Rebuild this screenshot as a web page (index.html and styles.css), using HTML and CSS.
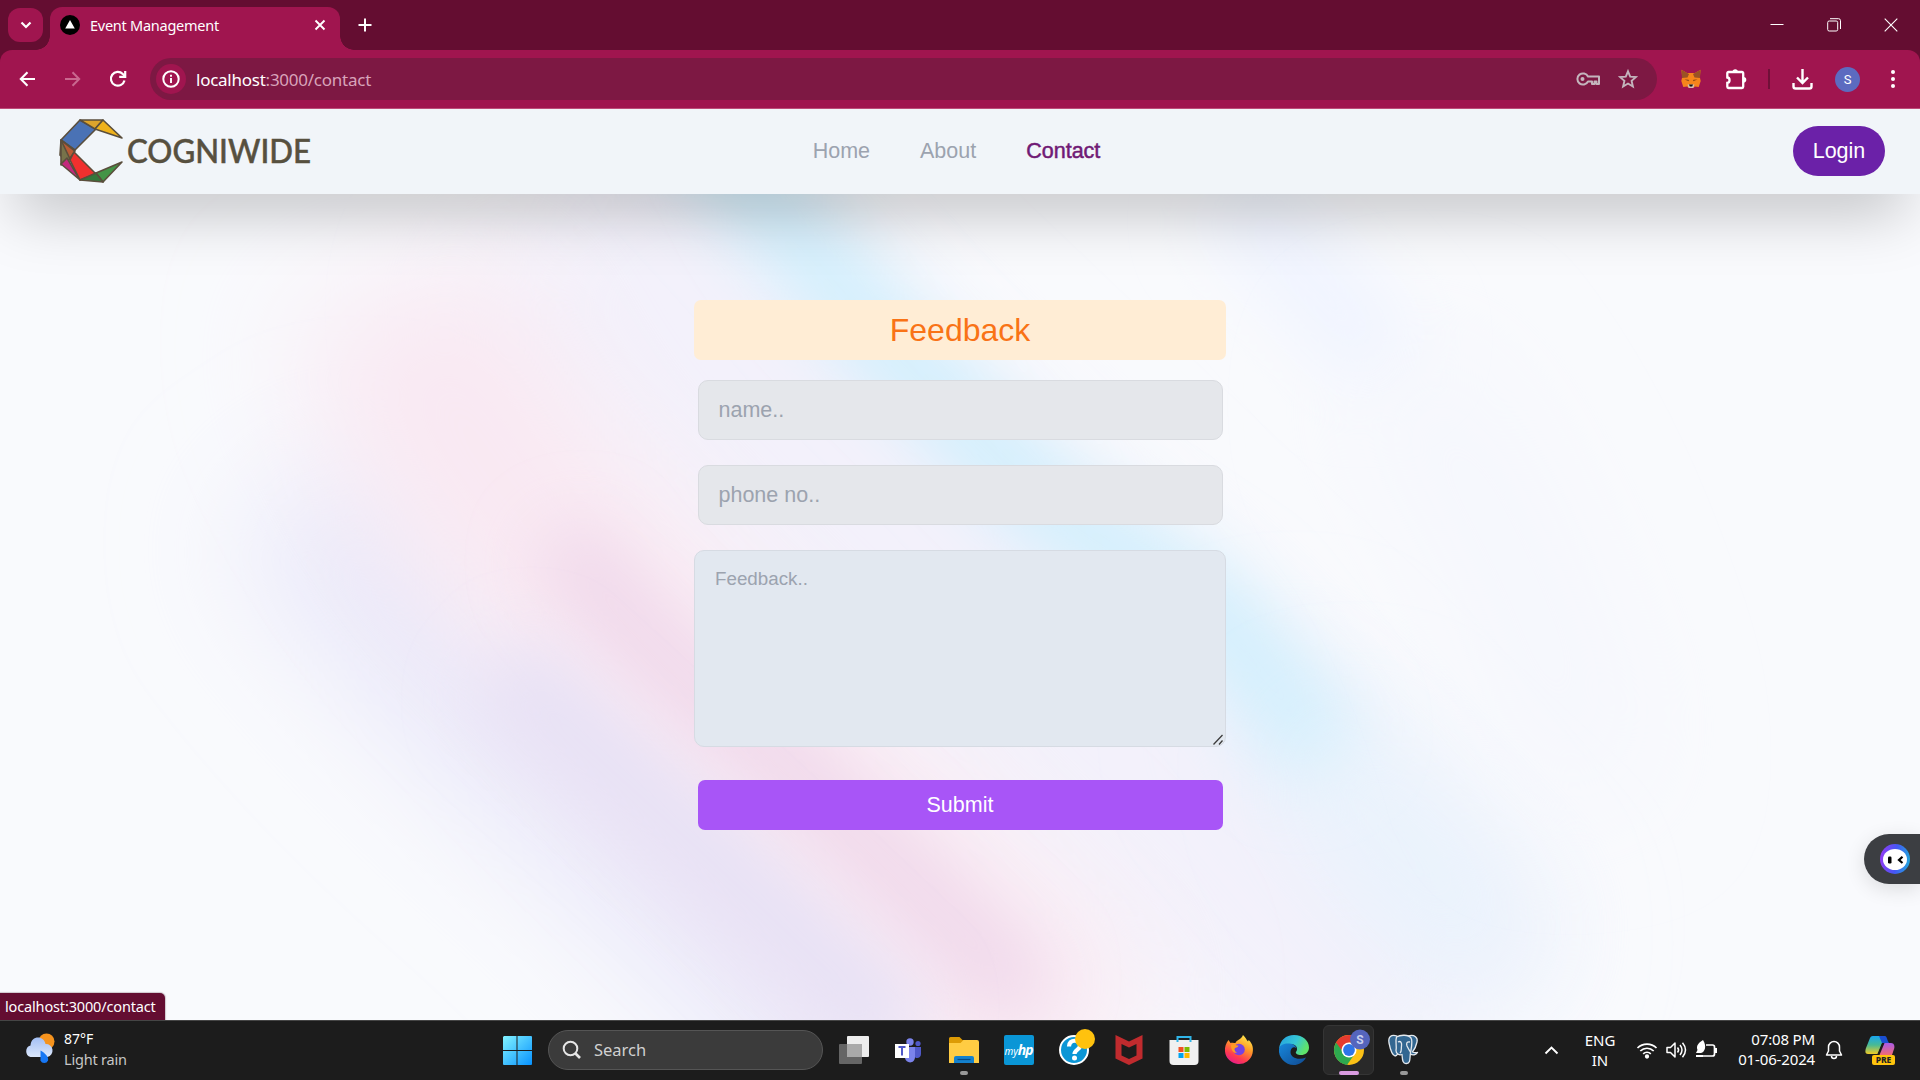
FILE: index.html
```html
<!DOCTYPE html>
<html lang="en">
<head>
<meta charset="utf-8">
<title>Event Management</title>
<link rel="stylesheet" href="styles.css">
</head>
<body>
<div class="screen">
  <div class="tabstrip">
    <div class="tab-search"><svg width="12" height="8" viewBox="0 0 12 8"><path d="M1.5 1.5 6 6l4.500-4.500" fill="none" stroke="#fff" stroke-width="2.200"/></svg></div>
    <div class="tab">
      <svg class="favicon" width="20" height="20" viewBox="0 0 20 20"><circle cx="10" cy="10" r="10"/><path d="M10 5l4.800 8.500H5.200z" fill="#fff"/></svg>
      <span class="tab-title">Event Management</span>
      <svg class="tab-close" width="12" height="12" viewBox="0 0 12 12"><path d="M1.500 1.500l9 9M10.500 1.500l-9 9" stroke="#fff" stroke-width="1.900"/></svg>
    </div>
    <svg class="new-tab" width="14" height="14" viewBox="0 0 14 14"><path d="M7 .5v13M.5 7h13" stroke="#fff" stroke-width="2"/></svg>
    <div class="window-controls">
      <svg width="14" height="14" viewBox="0 0 14 14"><path d="M.5 6.500h13" stroke="#fff"/></svg>
      <svg width="14" height="14" viewBox="0 0 14 14" fill="none" stroke="#fff"><rect x=".7" y="3" width="10" height="10" rx="1.500"/><path d="M3 .7h8.500a2 2 0 0 1 2 2V11"/></svg>
      <svg width="14" height="14" viewBox="0 0 14 14"><path d="M.7.7l12.600 12.600M13.300.7L.7 13.300" stroke="#fff" stroke-width="1.100"/></svg>
    </div>
  </div>

  <div class="toolbar">
    <div class="nav-icons">
      <svg width="17" height="16" viewBox="0 0 17 16" fill="none" stroke="#fff" stroke-width="2.100"><path d="M16 8H2M8.500 1.200 1.800 8l6.700 6.800"/></svg>
      <svg width="17" height="16" viewBox="0 0 17 16" fill="none" stroke="#c9688f" stroke-width="2"><path d="M1 8h14M8.500 1.200 15.200 8l-6.700 6.800"/></svg>
      <svg width="18" height="18" viewBox="0 0 18 18" fill="none" stroke="#fff" stroke-width="2.200"><path d="M15.500 10.500A6.900 6.900 0 1 1 13.800 4L16 6.200"/><path d="M16.200 1v5.900h-6"/></svg>
    </div>
    <div class="urlbar">
      <div class="site-info"><svg width="18" height="18" viewBox="0 0 18 18"><circle cx="9" cy="9" r="7.700" fill="none" stroke="#fff" stroke-width="2"/><path d="M9 8v5M9 4.800v2" stroke="#fff" stroke-width="1.900"/></svg></div>
      <div class="url">localhost<span>:3000/contact</span></div>
      <svg width="24" height="14" viewBox="0 0 24 14" fill="none" stroke="#c4b5bd" stroke-width="2"><path d="M12 4.500h11v7.500h-2.500V9.500h-2V12h-2.500V9.500h-4a5.600 5.600 0 1 1 0-5z" stroke-linejoin="round"/><circle cx="6.500" cy="7" r="2" fill="#c4b5bd" stroke="none"/></svg>
      <svg class="star" width="20" height="20" viewBox="0 0 20 20" fill="none" stroke="#c4b5bd" stroke-width="1.900"><path d="M10 2.300l2.200 5.300 5.700.5-4.300 3.800 1.300 5.600-4.900-3-4.900 3 1.300-5.600L2.100 8.100l5.700-.5z"/></svg>
    </div>
    <div class="toolbar-actions">
      <svg width="20" height="20" viewBox="0 0 20 20"><path d="M.4.8 6 4h8l5.600-3.200-.8 7.200.9 4-2 6-3.700-.6L12 19H8l-2-1.600-3.700.6-2-6 .9-4z" fill="#f6851b"/><path d="M.4.8 8 5 6.500 8.500 1 9zM19.600.8 12 5l1.500 3.500L19 9z" fill="#9a5224"/><path d="M3.500 10.500l4 .3.500 1.400zM16.500 10.500l-4 .3-.5 1.400z" fill="#763e1a"/><path d="M6.500 15.500h7L12.300 19H7.700z" fill="#d6c0b3"/><path d="M8 15.500h4l-.8 2H8.800z" fill="#161616"/></svg>
      <svg class="puzzle" width="22" height="22" viewBox="0 0 22 22"><path d="M3.500 4H17a1.200 1.200 0 0 1 1.200 1.200v13.600A1.200 1.200 0 0 1 17 20H3.500a1.200 1.200 0 0 1-1.200-1.200v-4c3-.3 3-5 0-5.300V5.200A1.200 1.200 0 0 1 3.500 4z" fill="none" stroke="#fff" stroke-width="2.300"/><path d="M7.500 4a2.700 2.700 0 0 1 5.400 0zM18.500 9a2.800 2.800 0 0 1 0 5.600z" fill="#fff"/></svg>
      <div class="divider"></div>
      <svg class="download" width="21" height="21" viewBox="0 0 21 21" fill="none" stroke="#fff" stroke-width="2.400"><path d="M10.500 0v13M5 8.500l5.500 5.500L16 8.500M1.500 14v3.500a2 2 0 0 0 2 2h14a2 2 0 0 0 2-2V14"/></svg>
      <div class="avatar">S</div>
      <svg class="menu" width="4" height="18" viewBox="0 0 4 18" fill="#fff"><circle cx="2" cy="2" r="2"/><circle cx="2" cy="9" r="2"/><circle cx="2" cy="16" r="2"/></svg>
    </div>
  </div>

  <div class="page">
    <svg class="backdrop" width="1920" height="911" viewBox="0 0 1920 911">
      <defs>
        <filter id="soft" filterUnits="userSpaceOnUse" x="-300" y="-300" width="2500" height="1700"><feGaussianBlur stdDeviation="34"/></filter>
        <filter id="softer" filterUnits="userSpaceOnUse" x="-300" y="-300" width="2500" height="1700"><feGaussianBlur stdDeviation="62"/></filter>
      </defs>
      <g fill="none">
        <path d="M560 90Q780 300 960 470T1450 930" stroke="#f3f1fb" stroke-width="320" filter="url(#softer)"/>
        <path d="M300 380Q400 530 600 700L880 980" stroke="#e9e8f9" stroke-width="170" filter="url(#softer)"/>
        <path d="M400 180Q450 340 600 490L1080 960" stroke="#f9e8f2" stroke-width="230" filter="url(#softer)"/>
        <path d="M560 430Q650 550 780 650L1030 890" stroke="#efd7ea" stroke-width="66" filter="url(#soft)"/>
        <path d="M500 560L720 760 900 930" stroke="#e7e1f5" stroke-width="90" filter="url(#soft)"/>
        <path d="M1260 580L1510 870" stroke="#e9f1fd" stroke-width="100" filter="url(#softer)"/>
        <path d="M680 0L790 120 880 225 1040 390 1220 510 1330 650" stroke="#d2effd" stroke-width="86" filter="url(#soft)"/>
        <path d="M1330 640L1500 850" stroke="#e7f4fd" stroke-width="70" filter="url(#softer)"/>
        <path d="M1230 80L1390 260" stroke="#f0f4ff" stroke-width="90" filter="url(#soft)"/>
        <path d="M1390 260Q1520 400 1590 680" stroke="#f4f6fd" stroke-width="100" filter="url(#softer)"/>
      </g>
    </svg>

    <header class="site-header">
      <svg class="logo" width="250" height="66" viewBox="0 0 250 66">
        <g stroke="#5a4e3c" stroke-width="1.600" stroke-linejoin="round">
          <path d="M20 2 36 11 15 32 1 22z" fill="#4a72b5"/>
          <path d="M20 2h23l-8 9z" fill="#dda42c"/>
          <path d="M43 2l19 18-27-9z" fill="#efb21c"/>
          <path d="M1 22l14 11-7 10-8-6z" fill="#b85b35"/>
          <path d="M1 22v25l9-6z" fill="#77734a"/>
          <path d="M7 40l13 22L1 46z" fill="#c3287d"/>
          <path d="M14 34l22 22-16 6-10-20z" fill="#f0302e"/>
          <path d="M62 44 36 55l7 9z" fill="#449447"/>
          <path d="M20 62l16-7 7 9z" fill="#34773b"/>
        </g>
        <text x="67" y="45" textLength="184" lengthAdjust="spacingAndGlyphs" class="logo-text">COGNIWIDE</text>
      </svg>
      <nav class="site-nav"><a>Home</a><a>About</a><a class="current">Contact</a></nav>
      <button class="login">Login</button>
    </header>

    <form class="feedback">
      <h1>Feedback</h1>
      <input type="text" placeholder="name..">
      <input type="text" placeholder="phone no..">
      <div class="message">
        <textarea placeholder="Feedback.."></textarea>
        <svg class="grip" width="10" height="11" viewBox="0 0 10 11"><path d="M.5 10.500l9-9.500M6 10.500l3.500-4" stroke="#3c3c3c" stroke-width="1.300"/></svg>
      </div>
      <button type="button">Submit</button>
    </form>

    <div class="assistant"><svg width="30" height="30" viewBox="0 0 30 30"><defs><linearGradient id="ring" x1="0" y1=".7" x2="1" y2=".8"><stop offset="0" stop-color="#8e3df5"/><stop offset=".5" stop-color="#4557f5"/><stop offset="1" stop-color="#20a9dc"/></linearGradient></defs><circle cx="15" cy="15" r="15" fill="url(#ring)"/><ellipse cx="15" cy="15.500" rx="12" ry="10.500" fill="#fff"/><rect x="8" y="12.500" width="3.500" height="7" rx="1.200"/><path d="M22.500 12.800 19 16l3.500 3" fill="none" stroke="#000" stroke-width="2.200"/></svg></div>
    <div class="status">localhost:3000/contact</div>
  </div>

  <div class="taskbar">
    <div class="weather">
      <svg width="31" height="31" viewBox="0 0 31 31"><defs><linearGradient id="cloud" x1="0" y1="0" x2="0" y2="1"><stop offset="0" stop-color="#a3bff5"/><stop offset="1" stop-color="#dbe7fb"/></linearGradient></defs><circle cx="22.500" cy="8.500" r="8" fill="#f5931e"/><path d="M6.500 24a6 6 0 0 1 0-11.500C7 2 20 2 21.500 11a6.600 6.600 0 0 1 2 13z" fill="url(#cloud)"/><path d="M16.500 17.500c3.500 2 8.500 6 7.500 10a4 4 0 0 1-7.500 0z" fill="#1677f5"/></svg>
      <div class="weather-text">87°F<span>Light rain</span></div>
    </div>
    <div class="apps">
      <div class="app"><svg width="30" height="30" viewBox="0 0 30 30"><defs><linearGradient id="win" x1="0" y1="0" x2="1" y2="1"><stop offset="0" stop-color="#82f3ff"/><stop offset="1" stop-color="#0792ff"/></linearGradient></defs><path d="M2 1h12.500v14H1V2zM15.500 1H29a1 1 0 0 1 1 1v13H15.500zM1 16h13.500v14H2a1 1 0 0 1-1-1zM15.500 16H30v13a1 1 0 0 1-1 1H15.500z" fill="url(#win)"/></svg></div>
      <div class="search"><svg width="20" height="20" viewBox="0 0 20 20" fill="none" stroke="#e6e6e6" stroke-width="2"><circle cx="8.500" cy="8.500" r="6.800"/><path d="M13.500 13.500l4.500 4.500" stroke-width="2.600"/></svg><span>Search</span></div>
      <div class="app"><svg width="30" height="30" viewBox="0 0 30 30"><rect x="8" y="1" width="22" height="21" rx="1" fill="#ededed"/><rect x="0" y="9" width="23" height="20" rx="1" fill="#707070" opacity=".88"/><rect x="8" y="9" width="15" height="13" fill="#a9a9a9"/></svg></div>
      <div class="app"><svg width="27" height="26" viewBox="0 0 27 26"><circle cx="15" cy="5" r="3.700" fill="#7b83eb"/><circle cx="23" cy="6.500" r="2.600" fill="#5059c9"/><path d="M19 10h7v7c0 5-6 5-7 2z" fill="#5059c9"/><path d="M10 10h10v10c0 7-9 7-10 1z" fill="#7b83eb"/><rect y="7" width="14" height="14" fill="#fff"/><path d="M3.500 10h7M7 10v8.500" stroke="#5059c9" stroke-width="2"/></svg></div>
      <div class="app running"><svg width="30" height="28" viewBox="0 0 30 28"><path d="M0 2.500A1.500 1.500 0 0 1 1.500 1h9l3 3H28v8H0z" fill="#dd9b05"/><path d="M0 7h11.500l3-3H28a2 2 0 0 1 2 2v21H0z" fill="#ffcc43"/><path d="M5 27v-5a2 2 0 0 1 2-2h16a2 2 0 0 1 2 2v5z" fill="#1481cd"/><path d="M8.500 23.500h13" stroke="#064a85" stroke-width="1.200"/></svg></div>
      <div class="app"><div class="myhp">my<b>hp</b></div></div>
      <div class="app"><svg class="help" width="38" height="38" viewBox="0 0 38 38"><circle cx="16" cy="22" r="14" fill="#0b96d6" stroke="#fff" stroke-width="2"/><path d="M11 18.500c0-8 11-7 11-.8 0 4-5.500 3.800-5.500 8.300" fill="none" stroke="#fff" stroke-width="4.200"/><circle cx="16.500" cy="30" r="2.500" fill="#fff"/><circle cx="27" cy="11" r="10" fill="#ffc20e"/></svg></div>
      <div class="app"><svg width="28" height="30" viewBox="0 0 28 30"><path d="M.5 0 14 6.500 27.500 0v23.500L14 30 .5 23.500zM6.500 9v11.500L14 24l7.500-3.500V9L14 12.500z" fill="#c02b2e" fill-rule="evenodd"/></svg></div>
      <div class="app"><svg width="30" height="30" viewBox="0 0 30 30"><path d="M8.500 7V2h13v5" fill="none" stroke="#30b5e8" stroke-width="2"/><path d="M.5 5h29v21a4 4 0 0 1-4 4h-21a4 4 0 0 1-4-4z" fill="#f0f0f0"/><path d="M8.500 7V5M21.500 7V5" stroke="#30b5e8" stroke-width="2"/><path d="M9.500 12H14.500v5h-5z" fill="#f25022"/><path d="M15.500 12h5v5h-5z" fill="#7fba00"/><path d="M9.500 18h5v5h-5z" fill="#00a4ef"/><path d="M15.500 18h5v5h-5z" fill="#ffb900"/></svg></div>
      <div class="app"><svg width="30" height="30" viewBox="0 0 30 30"><defs><linearGradient id="fox" x1=".8" y1="0" x2=".3" y2="1"><stop offset="0" stop-color="#fff04f"/><stop offset=".4" stop-color="#ff9b28"/><stop offset=".75" stop-color="#ff3a50"/><stop offset="1" stop-color="#e51b8d"/></linearGradient></defs><path d="M19 0c3 3 3.500 5 5 6.500l.7-1.500C29 9 29.500 14 28.500 18.500a14 14 0 0 1-27.500-2C.5 12 2 8 4.500 5l2 3c2-.7 4-.2 5 0C12 5 17 5 19 0z" fill="url(#fox)"/><circle cx="15" cy="14.500" r="5.800" fill="#7542e5"/><path d="M7 10c3-2 4.500.5 7.500.6-.7 2.500-3.500 1.900-4 3.400 0 1.500 1 3 2.500 3.500-3 1.500-6-2-6-7.500z" fill="#ff9b23"/></svg></div>
      <div class="app"><svg width="30" height="30" viewBox="0 0 30 30"><defs><linearGradient id="wave" x1="0" y1="0" x2="1" y2=".4"><stop offset="0" stop-color="#249de0"/><stop offset=".6" stop-color="#36c7d5"/><stop offset="1" stop-color="#5fe36b"/></linearGradient><linearGradient id="deep" x1="0" y1="0" x2="1" y2="1"><stop offset="0" stop-color="#1788dc"/><stop offset="1" stop-color="#104a91"/></linearGradient></defs><path d="M0 14C1 5 7 0 15 0c9 0 15 6 15 12.500 0 5-4 7.500-8 7.500-3.500 0-6-1.500-5-3 3-4-.5-8-5-8-5 0-10 1-12 5z" fill="url(#wave)"/><path d="M0 14c1-4.500 6-6 10.500-5.500 4 .3 6.500 2.500 7 5-2-2.500-6-1-6 3.500 0 6 8 8.500 15.500 5.500C24 28 19 30 15 30 6 30-1 22 0 14z" fill="url(#deep)"/></svg></div>
      <div class="app active"><svg class="chrome" width="36" height="36" viewBox="0 0 36 36"><circle cx="15" cy="21" r="15" fill="#fbc116"/><path d="M15 21 2 13.500A15 15 0 0 0 13 35.900L20 26z" fill="#2da94f"/><path d="M2 13.500A15 15 0 0 1 28 13.500H15L9 23z" fill="#e53a2f"/><circle cx="15" cy="21" r="7.500" fill="#fff"/><circle cx="15" cy="21" r="5.900" fill="#2d75e8"/><circle cx="26" cy="10.500" r="10" fill="#5565bd"/><text x="26" y="15" text-anchor="middle" class="badge-letter">S</text></svg></div>
      <div class="app running"><svg width="31" height="31" viewBox="0 0 31 31"><g fill="#336791" stroke="#e4e9ee" stroke-width="1.300" stroke-linejoin="round"><path d="M9 2C3 0 0 3 1 9c1 5 3 12 6 13 2 0 3-3 4-4z"/><path d="M20 2c7-2 10 2 9 6-1 5-3 8-4.500 10 2 1 4 .5 5 .5-1.500 2.500-5 3-7 1.500z"/><path d="M8.500 3c4-2.500 12-2.500 14.500 1 2 3 .5 9-.5 15-1 5 .5 10-4 10.500-4.500.5-4-5-4.500-9-3 1-6-1-6-4 1-5-1-9 .5-13.500z"/><path d="M10 8c3-1.500 4 1 3.500 4s.5 5-1.500 7M22 8c-3-.5-4 1-3 4 1 2 2 4 3.500 6" fill="none"/></g></svg></div>
    </div>
    <div class="tray">
      <svg width="15" height="10" viewBox="0 0 15 10"><path d="M1.500 8.500l6-6 6 6" fill="none" stroke="#fff" stroke-width="1.900"/></svg>
      <div class="lang">ENG<br>IN</div>
      <svg class="wifi" width="22" height="18" viewBox="0 0 22 18" fill="none" stroke="#fff" stroke-width="1.700"><path d="M1.500 7a13.400 13.400 0 0 1 19 0M4.300 10a9.500 9.500 0 0 1 13.400 0M7.200 12.800a5.400 5.400 0 0 1 7.600 0"/><circle cx="11" cy="15.500" r="1.300" fill="#fff"/></svg>
      <svg class="sound" width="21" height="18" viewBox="0 0 21 18" fill="none" stroke="#fff" stroke-width="1.500"><path d="M1 6.500h3.500L9 2v14l-4.500-4.500H1z" stroke-linejoin="round"/><path d="M11.500 6.500q2.200 2.500 0 5M14 4q4 5 0 10M16.500 1.800q6 7.200 0 14.400"/></svg>
      <svg class="battery" width="22" height="19" viewBox="0 0 22 19"><path d="M10 5h6.500a2 2 0 0 1 2 2v7a2 2 0 0 1-2 2H5" fill="none" stroke="#fff" stroke-width="1.700"/><path d="M19 8h2v5h-2z" fill="#fff"/><path d="M7 0C2 3 0 6 1.500 10L0 13h5c4-1 6-7 2-13zM0 15h7v2H0z" fill="#fff"/></svg>
      <div class="clock">07:08 PM<br>01-06-2024</div>
      <svg class="bell" width="18" height="20" viewBox="0 0 18 20" fill="none" stroke="#fff" stroke-width="1.500"><path d="M1.500 15 3.500 11V7a5.500 5.500 0 0 1 11 0v4l2 4zM6.500 16a2.500 2.500 0 0 0 5 0" stroke-linejoin="round"/></svg>
      <svg class="copilot" width="30" height="30" viewBox="0 0 30 30"><defs><linearGradient id="cpa" x1="0" y1="0" x2="0" y2="1"><stop offset="0" stop-color="#18a7ef"/><stop offset=".5" stop-color="#48ba94"/><stop offset="1" stop-color="#f0cb26"/></linearGradient><linearGradient id="cpb" x1="0" y1="0" x2="0" y2="1"><stop offset="0" stop-color="#a95be8"/><stop offset="1" stop-color="#f36b74"/></linearGradient></defs><path d="M8 1h12l-7 18H3C0 19 0 16 1 13L5 3a3 3 0 0 1 3-2z" fill="url(#cpa)"/><path d="M14 1h6c2 0 2 4 4 7h-7z" fill="#1a4fd1"/><path d="M18 8h8c3 0 4 3 3 6l-2 6H13z" fill="url(#cpb)"/><path d="M17 8h2.500l-5 12H12z" fill="#1c1c1c"/><rect x="7" y="20" width="23" height="10" rx="2" fill="#ffc40d"/><text x="18.500" y="28" text-anchor="middle" class="pre">PRE</text></svg>
    </div>
  </div>
</div>
</body>
</html>
```

FILE: styles.css
```css
* { box-sizing: border-box; }
body { margin: 0; overflow: hidden; font-family: "Liberation Sans", Arial, sans-serif; }
svg { display: block; flex: none; overflow: visible; }
.screen { width: 1920px; height: 1080px; display: flex; flex-direction: column; background: #640d31; }

/* Browser window */
.tabstrip { height: 50px; display: flex; align-items: center; padding-left: 8px; font-family: "Noto Sans", sans-serif; }
.tab-search { width: 35px; height: 34px; border-radius: 12px; background: #a0154f; display: grid; place-items: center; }
.tab { position: relative; align-self: flex-end; width: 290px; height: 43px; margin-left: 7px; padding: 0 14px 7px 10px; border-radius: 12px 12px 0 0; background: #a0154f; display: flex; align-items: center; }
.tab::before, .tab::after { content: ""; position: absolute; bottom: 0; width: 14px; height: 14px; }
.tab::before { left: -14px; background: radial-gradient(circle at 0 0, transparent 13.500px, #a0154f 14px); }
.tab::after { right: -14px; background: radial-gradient(circle at 100% 0, transparent 13.500px, #a0154f 14px); }
.tab-title { margin-left: 10px; color: #fff; font-size: 14.500px; letter-spacing: -0.250px; white-space: nowrap; }
.tab-close { margin-left: auto; }
.new-tab { margin-left: 18px; }
.window-controls { margin-left: auto; margin-right: 22px; display: flex; gap: 43px; }
.toolbar { height: 59px; background: #a0154f; border-bottom: 1px solid #bd4c79; border-radius: 12px 12px 0 0; display: flex; align-items: center; padding: 0 25px 0 19px; font-family: "Noto Sans", sans-serif; }
.nav-icons { width: 131px; display: flex; align-items: center; gap: 28px; }
.urlbar { width: 1507px; height: 42px; border-radius: 21px; background: #7d1843; display: flex; align-items: center; padding: 0 20px 0 6px; }
.site-info { width: 30px; height: 30px; border-radius: 50%; background: #a0154f; display: grid; place-items: center; }
.url { margin: 0 auto 0 10px; color: #fff; font-size: 17px; letter-spacing: -0.250px; white-space: nowrap; }
.url span { color: #d8a3ba; }
.star { margin-left: 18px; margin-right: -1px; }
.toolbar-actions { flex: 1; display: flex; align-items: center; padding-left: 24px; }
.puzzle { margin-left: 24px; }
.divider { width: 2px; height: 20px; margin-left: 21px; background: #701038; }
.download { margin-left: 22px; }
.avatar { width: 25px; height: 25px; margin-left: 22px; border-radius: 50%; background: #5c6bc0; color: #fff; font: 13px/25px Roboto, sans-serif; text-align: center; }
.menu { margin-left: auto; }

/* Site */
.page { position: relative; height: 911px; overflow: hidden; background: #f9fafd; }
.backdrop { position: absolute; left: 0; top: 0; }
.site-header { position: relative; height: 85px; padding: 0 35px 2px 60px; background: #f1f5f9; box-shadow: 0 31px 62px -15px rgba(0,0,0,.25); display: flex; align-items: center; justify-content: space-between; }
.logo { margin-top: 1px; }
.logo-text { font-family: Lato, sans-serif; font-size: 32px; font-weight: 500; fill: #57503f; stroke: #57503f; stroke-width: .5px; }
.site-nav { display: flex; gap: 50px; margin-right: 190px; padding-top: 1px; font-size: 21.500px; color: #9ca3af; }
.site-nav .current { color: #701a75; -webkit-text-stroke: .5px #701a75; }
.login { width: 92px; height: 50px; padding: 2px 0 0; border: 0; border-radius: 25px; background: #6b21a8; color: #fff; font: 21.500px "Liberation Sans", sans-serif; }
.feedback { position: relative; width: 532px; margin: 106px auto 0; display: flex; flex-direction: column; align-items: center; }
.feedback h1 { width: 100%; margin: 0 0 20px; border-radius: 7px; background: #ffedd5; color: #f97316; font-size: 32px; font-weight: 400; line-height: 60px; text-align: center; }
.feedback input { width: 525px; height: 60px; margin: 0 0 25px; padding: 0 20px; border: 1px solid #d9dbe0; border-radius: 10px; background: #e5e7eb; font: 21.500px "Liberation Sans", sans-serif; }
.message { position: relative; width: 532px; height: 197px; }
.feedback textarea { display: block; width: 100%; height: 100%; margin: 0; padding: 16px 20px; border: 1px solid #d6dbe3; border-radius: 10px; background: #e2e8f0; resize: none; font: 18.800px/23px "Liberation Sans", sans-serif; }
.grip { position: absolute; right: 3px; bottom: 2px; }
.feedback ::placeholder { color: #9ca3af; }
.feedback button { width: 525px; height: 50px; margin-top: 33px; border: 0; border-radius: 7px; background: #a855f7; color: #fff; font: 21.500px "Liberation Sans", sans-serif; }
.assistant { position: absolute; right: 0; top: 725px; width: 56px; height: 50px; padding: 10px 0 0 16px; border-radius: 25px 0 0 25px; background: #3c3e42; box-shadow: 0 5px 20px rgba(0,0,0,.12); }
.status { position: absolute; left: 0; bottom: 0; width: 165px; height: 27px; padding-left: 5px; border-radius: 0 5px 0 0; background: #640d31; box-shadow: 0 0 1px 1px #cfc6cc; color: #fff; font: 14.500px/26px "Noto Sans", sans-serif; letter-spacing: -0.150px; white-space: nowrap; }

/* Taskbar */
.taskbar { height: 60px; padding-bottom: 2px; background: #1c1c1c; border-top: 1px solid #454545; display: flex; align-items: center; color: #fff; font: 14.500px/20px "Noto Sans", sans-serif; }
.weather { width: 489px; padding-left: 24px; display: flex; align-items: center; gap: 9px; }
.weather svg { margin-top: -2px; }
.weather-text { display: flex; flex-direction: column; padding-bottom: 1px; font-size: 14px; }
.weather-text span { color: #c6c6c6; font-size: 14.500px; letter-spacing: -0.200px; }
.apps { display: flex; align-items: center; }
.app { position: relative; width: 55px; height: 50px; display: grid; place-items: center; }
.search { width: 275px; height: 40px; margin: 0 3px 0 4px; padding-left: 13px; border: 1px solid #555; border-radius: 20px; background: #3b3b3b; display: flex; align-items: center; gap: 12px; color: #d0d0d0; font-size: 16.500px; }
.running::after, .active::after { content: ""; position: absolute; bottom: 0; width: 8px; height: 4px; border-radius: 2px; background: #999; }
.active::after { width: 20px; background: #d99be0; }
.active::before { content: ""; position: absolute; inset: 0 2px; border: 1px solid #353535; border-radius: 6px; background: #292929; }
.chrome { position: relative; left: 3px; top: -3px; }
.help { position: relative; left: 3px; top: -3px; }
.myhp { width: 30px; height: 30px; border-radius: 2px; background: #0a96d6; font: italic 10px/29px "Noto Sans", sans-serif; text-align: center; }
.myhp b { font-size: 14px; letter-spacing: -1px; }
.badge-letter { font: 700 12px Roboto, sans-serif; fill: #c9d0ef; }
.tray { margin-left: auto; padding-right: 25px; display: flex; align-items: center; }
.lang { width: 40px; margin-left: 21px; text-align: center; font-size: 15px; }
.wifi { margin-left: 16px; }
.sound { margin-left: 8px; }
.battery { margin-left: 9px; }
.clock { width: 89px; margin-left: 8px; padding-bottom: 2px; text-align: right; font-size: 15px; letter-spacing: -0.150px; white-space: nowrap; }
.bell { margin-left: 10px; }
.copilot { margin-left: 22px; }
.pre { font: 800 8.500px "Noto Sans", sans-serif; fill: #222; }
```
